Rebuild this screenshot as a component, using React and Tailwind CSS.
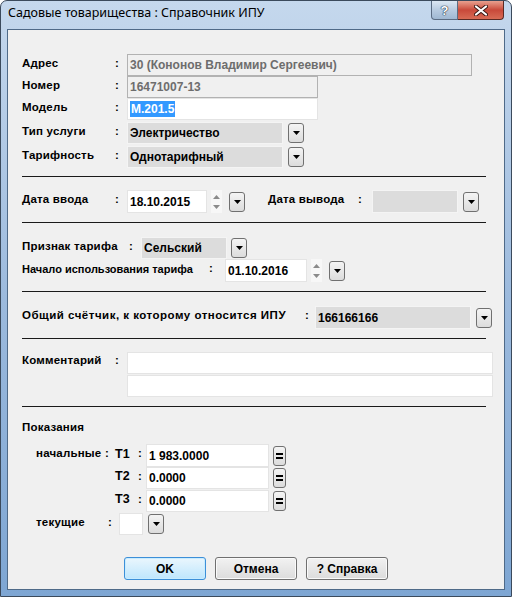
import React from 'react';

const LBL = 'font-bold text-[11.5px] tracking-[0.2px] text-black leading-none';

// Drop-down arrow button used next to combo boxes
function DropBtn({ className = '' }) {
  return (
    <div
      className={`w-[16px] h-[20px] shrink-0 rounded-[3px] border border-[#707070] bg-linear-to-b from-[#f4f4f4] to-[#dcdcdc] flex items-center justify-center ${className}`}
    >
      <svg width="7" height="4" viewBox="0 0 7 4">
        <path d="M0 0 H7 L3.5 4 Z" fill="#000" />
      </svg>
    </div>
  );
}

function EqBtn() {
  return (
    <div className="w-[13px] h-[20px] ml-[4px] shrink-0 rounded-[3px] border border-[#707070] bg-linear-to-b from-[#f4f4f4] to-[#dcdcdc] flex items-center justify-center">
      <svg width="7" height="6" viewBox="0 0 7 6">
        <rect x="0" y="0" width="7" height="2" fill="#000" />
        <rect x="0" y="4" width="7" height="2" fill="#000" />
      </svg>
    </div>
  );
}

function Spinner() {
  return (
    <div className="w-[11px] h-[23px] ml-[4px] shrink-0 bg-[#f7f7f7] flex flex-col items-center justify-center gap-[6px]">
      <svg width="7" height="4" viewBox="0 0 7 4">
        <path d="M0 4 H7 L3.5 0 Z" fill="#8a8a8a" />
      </svg>
      <svg width="7" height="4" viewBox="0 0 7 4">
        <path d="M0 0 H7 L3.5 4 Z" fill="#8a8a8a" />
      </svg>
    </div>
  );
}

// kind: 'ro' (read-only, gray text), 'combo' (gray bg), 'white'
function Field({ w, h = 22, kind = 'white', children }) {
  const styles = {
    ro: 'bg-[#f0f0f0] border-[#b2b2b2] text-[#6d6d6d]',
    combo: 'bg-[#dcdcdc] border-[#f4f4f4] text-black',
    white: 'bg-white border-[#e4e4e4] text-black',
  };
  return (
    <div
      className={`shrink-0 border ${styles[kind]} flex items-center pl-[2px] font-bold text-[12px] leading-none whitespace-nowrap overflow-hidden`}
      style={{ width: w, height: h }}
    >
      {children}
    </div>
  );
}

function Divider({ className = '' }) {
  return <div className={`ml-[14px] w-[464px] h-px bg-[#1a1a1a] ${className}`} />;
}

function Button({ children, primary }) {
  return (
    <div
      className={`w-[82px] h-[23px] rounded-[3px] border flex items-center justify-center font-bold text-[12px] text-black ${
        primary
          ? 'border-[#3c8fd8] bg-linear-to-b from-[#eaf6fd] to-[#bee6fd] shadow-[inset_0_0_0_1px_#c8ecff]'
          : 'border-[#707070] bg-linear-to-b from-[#f2f2f2] to-[#dcdcdc] shadow-[inset_0_0_0_1px_#fafafa]'
      }`}
    >
      {children}
    </div>
  );
}

export default function App() {
  return (
    <div
      className="w-[512px] h-[597px] rounded-t-[7px] border border-[#3b4a5c] bg-linear-to-b from-[#c5d8ed] via-[#9cbadd] to-[#7ea6d3] flex flex-col overflow-hidden"
      style={{ fontFamily: '"Liberation Sans", Arial, sans-serif' }}
    >
      {/* Title bar */}
      <div className="h-[28px] shrink-0 flex items-start justify-between pl-[7px] pr-[7px]">
        <div
          className="text-[12.5px] text-black pt-[6px] leading-none"
          style={{ fontFamily: '"Noto Sans", "Open Sans", sans-serif' }}
        >
          Садовые товарищества : Справочник ИПУ
        </div>
        <div className="flex">
          <div className="w-[27px] h-[19px] rounded-bl-[4px] border border-t-0 border-[#5b6c82] bg-linear-to-b from-[#dce7f3] via-[#b8cbe0] to-[#a0b8d2] flex items-center justify-center">
            <span
              className="text-white font-bold text-[13px] leading-none"
              style={{ textShadow: '0 0 1px #1f2f44, 0 0 1px #1f2f44, 0 0 1px #1f2f44' }}
            >
              ?
            </span>
          </div>
          <div className="w-[46px] h-[19px] rounded-br-[4px] border border-t-0 border-l-0 border-[#5b2a24] bg-linear-to-b from-[#e8a08f] via-[#c9493a] to-[#d86b55] flex items-center justify-center">
            <svg width="14" height="11" viewBox="0 0 14 11">
              <path d="M2 1.5 L12 9.5 M12 1.5 L2 9.5" stroke="#3b1712" strokeWidth="4" strokeLinecap="round" />
              <path d="M2 1.5 L12 9.5 M12 1.5 L2 9.5" stroke="#fff" strokeWidth="2.2" strokeLinecap="round" />
            </svg>
          </div>
        </div>
      </div>

      {/* Client area */}
      <div className="mx-[6px] h-[561px] border border-[#4f6a88] bg-[#f0f0f0] flex flex-col pt-[24px]">
        {/* Адрес */}
        <div className="flex items-center h-[22px] pl-[14px]">
          <span className={`${LBL} w-[93px] pb-[3px]`}>Адрес</span>
          <span className={`${LBL} w-[12px] pb-[3px]`}>:</span>
          <Field w={345} kind="ro">30 (Кононов Владимир Сергеевич)</Field>
        </div>
        <div className="flex items-center h-[22px] pl-[14px]">
          <span className={`${LBL} w-[93px] pb-[3px]`}>Номер</span>
          <span className={`${LBL} w-[12px] pb-[3px]`}>:</span>
          <Field w={191} kind="ro">16471007-13</Field>
        </div>
        <div className="flex items-center h-[22px] pl-[14px]">
          <span className={`${LBL} w-[93px] pb-[3px]`}>Модель</span>
          <span className={`${LBL} w-[12px] pb-[3px]`}>:</span>
          <Field w={191} kind="white">
            <span className="bg-[#3399ff] text-white px-px py-[2px]">М.201.5</span>
          </Field>
        </div>
        <div className="flex items-center h-[22px] pl-[14px] mt-[2px]">
          <span className={`${LBL} w-[93px] pb-[3px]`}>Тип услуги</span>
          <span className={`${LBL} w-[12px] pb-[3px]`}>:</span>
          <Field w={156} kind="combo">Электричество</Field>
          <DropBtn className="ml-[5px]" />
        </div>
        <div className="flex items-center h-[22px] pl-[14px] mt-[2px]">
          <span className={`${LBL} w-[93px] pb-[3px]`}>Тарифность</span>
          <span className={`${LBL} w-[12px] pb-[3px]`}>:</span>
          <Field w={156} kind="combo">Однотарифный</Field>
          <DropBtn className="ml-[5px]" />
        </div>

        <Divider className="mt-[8px]" />

        {/* Даты */}
        <div className="flex items-center h-[23px] pl-[14px] mt-[13px]">
          <span className={`${LBL} w-[93px] pb-[3px]`}>Дата ввода</span>
          <span className={`${LBL} w-[12px] pb-[3px]`}>:</span>
          <Field w={80} h={23} kind="white">18.10.2015</Field>
          <Spinner />
          <DropBtn className="ml-[7px]" />
          <span className={`${LBL} ml-[23px] w-[90px] pb-[3px]`}>Дата вывода</span>
          <span className={`${LBL} w-[14px] pb-[3px]`}>:</span>
          <Field w={86} h={23} kind="combo" />
          <DropBtn className="ml-[5px]" />
        </div>

        <Divider className="mt-[9px]" />

        {/* Тариф */}
        <div className="flex items-center h-[22px] pl-[14px] mt-[14px]">
          <span className={`${LBL} w-[107px] pb-[3px]`}>Признак тарифа</span>
          <span className={`${LBL} w-[12px] pb-[3px]`}>:</span>
          <Field w={86} kind="combo">Сельский</Field>
          <DropBtn className="ml-[4px]" />
        </div>
        <div className="flex items-center h-[23px] pl-[14px]">
          <span className="font-bold text-[11px] text-black leading-none w-[187px] pb-[3px]">
            Начало использования тарифа
          </span>
          <span className={`${LBL} w-[16px] pb-[3px]`}>:</span>
          <Field w={82} h={23} kind="white">01.10.2016</Field>
          <Spinner />
          <DropBtn className="ml-[7px]" />
        </div>

        <Divider className="mt-[9px]" />

        {/* Общий счётчик */}
        <div className="flex items-center h-[23px] pl-[14px] mt-[14px]">
          <span className="font-bold text-[11.5px] tracking-[0.5px] text-black leading-none w-[283px] pb-[3px]">
            Общий счётчик, к которому относится ИПУ
          </span>
          <span className={`${LBL} w-[10px] pb-[3px]`}>:</span>
          <Field w={156} h={23} kind="combo">166166166</Field>
          <DropBtn className="ml-[5px]" />
        </div>

        <Divider className="mt-[9px]" />

        {/* Комментарий */}
        <div className="flex items-start pl-[14px] mt-[13px]">
          <span className={`${LBL} w-[93px] pt-[3px]`}>Комментарий</span>
          <span className={`${LBL} w-[12px] pt-[3px]`}>:</span>
          <div className="flex flex-col gap-px">
            <Field w={366} kind="white" />
            <Field w={366} kind="white" />
          </div>
        </div>

        <Divider className="mt-[9px]" />

        {/* Показания */}
        <div className="h-[14px] mt-[14px] pl-[14px] flex items-center">
          <span className={LBL}>Показания</span>
        </div>
        <div className="flex items-center h-[23px] pl-[28px] mt-[9px]">
          <span className={`${LBL} w-[69px] pb-[3px]`}>начальные</span>
          <span className={`${LBL} w-[10px] pb-[3px]`}>:</span>
          <span className={`${LBL} w-[23px] pb-[3px] text-[12.5px]`}>T1</span>
          <span className={`${LBL} w-[8px] pb-[3px]`}>:</span>
          <Field w={123} h={23} kind="white">1 983.0000</Field>
          <EqBtn />
        </div>
        <div className="flex items-center h-[22px] pl-[107px]">
          <span className={`${LBL} w-[23px] pb-[3px] text-[12.5px]`}>T2</span>
          <span className={`${LBL} w-[8px] pb-[3px]`}>:</span>
          <Field w={123} kind="white">0.0000</Field>
          <EqBtn />
        </div>
        <div className="flex items-center h-[22px] pl-[107px] mt-px">
          <span className={`${LBL} w-[23px] pb-[3px] text-[12.5px]`}>T3</span>
          <span className={`${LBL} w-[8px] pb-[3px]`}>:</span>
          <Field w={123} kind="white">0.0000</Field>
          <EqBtn />
        </div>
        <div className="flex items-center h-[22px] pl-[28px] mt-px">
          <span className={`${LBL} w-[72px] pb-[3px]`}>текущие</span>
          <span className={`${LBL} w-[11px] pb-[3px]`}>:</span>
          <Field w={24} kind="white" />
          <DropBtn className="ml-[5px]" />
        </div>

        {/* Кнопки */}
        <div className="flex gap-[9px] pl-[116px] mt-[22px]">
          <Button primary>OK</Button>
          <Button>Отмена</Button>
          <Button>? Справка</Button>
        </div>
      </div>
    </div>
  );
}
